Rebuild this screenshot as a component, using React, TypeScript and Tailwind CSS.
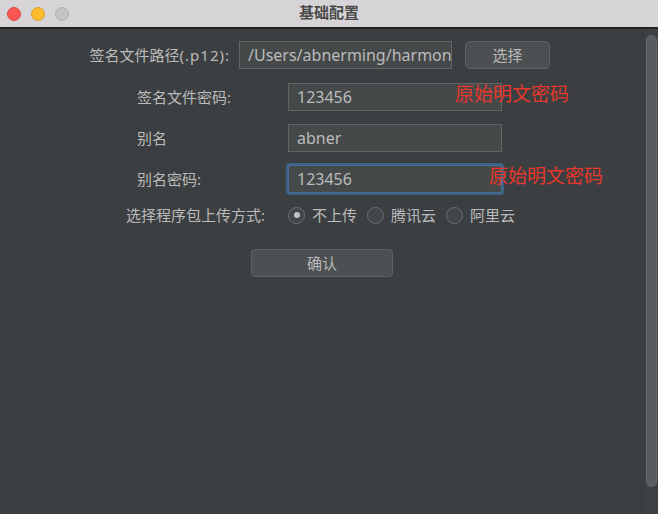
import React from 'react';

const FONT = { fontFamily: '"Noto Sans", "Noto Sans CJK SC", sans-serif' };

function Field({ value, width, focused }: { value: string; width: string; focused?: boolean }) {
  return (
    <div
      className={`${width} h-[28px] flex items-center px-2 bg-[#45494a] text-[16px] text-[#bbbbbb] overflow-hidden whitespace-nowrap ${
        focused
          ? 'border border-[#4a6f97] ring-2 ring-[#3d628a] rounded-[2px]'
          : 'border border-[#646464]'
      }`}
    >
      {value}
    </div>
  );
}

function Radio({ label, checked }: { label: string; checked?: boolean }) {
  return (
    <div className="flex items-center gap-[7px]">
      <span className="w-[17px] h-[17px] rounded-full border border-[#6b6f71] bg-[#42464a] flex items-center justify-center">
        {checked && <span className="w-[6px] h-[6px] rounded-full bg-[#c4c4c4]" />}
      </span>
      <span>{label}</span>
    </div>
  );
}

export default function App() {
  return (
    <div className="w-[658px] h-[514px] flex flex-col bg-[#3c3f41] overflow-hidden" style={FONT}>
      {/* Title bar */}
      <div className="h-[29px] shrink-0 bg-[#d6d4d6] border-b-2 border-[#232323] flex items-center">
        <div className="flex items-center gap-[10px] pl-[7px]">
          <span className="w-[14px] h-[14px] rounded-full bg-[#fc5753] border border-[#de4740]" />
          <span className="w-[14px] h-[14px] rounded-full bg-[#fdbc2e] border border-[#de9f22]" />
          <span className="w-[14px] h-[14px] rounded-full bg-[#c5c4c5] border border-[#b0afb0]" />
        </div>
        <div className="flex-1 text-center pr-[69px] pb-[2px] text-[15px] font-bold text-[#4a4a4a]">基础配置</div>
      </div>

      <div className="flex-1 flex">
        {/* Form */}
        <div className="flex-1 flex flex-col text-[15px] text-[#bbbbbb]">
          <div className="mt-[12px] h-[28px] flex items-center">
            <div className="w-[231px] text-right pr-[1px] whitespace-nowrap">
              签名文件路径<span className="tracking-[1px]">(.p12):</span>
            </div>
            <div className="ml-[8px]">
              <Field value="/Users/abnerming/harmony" width="w-[213px]" />
            </div>
            <button className="ml-[13px] w-[85px] h-[28px] rounded-[5px] bg-[#4c5052] border border-[#5e6163] text-[15px] text-[#bbbbbb]">
              选择
            </button>
          </div>

          <div className="mt-[14px] h-[28px] flex items-center relative">
            <div className="w-[288px] pl-[137px]">签名文件密码:</div>
            <Field value="123456" width="w-[214px]" />
            <span className="absolute left-[455px] top-[-3px] text-[19px] text-[#e8372c]">原始明文密码</span>
          </div>

          <div className="mt-[13px] h-[28px] flex items-center">
            <div className="w-[288px] pl-[137px]">别名</div>
            <Field value="abner" width="w-[214px]" />
          </div>

          <div className="mt-[13px] h-[28px] flex items-center relative">
            <div className="w-[288px] pl-[137px]">别名密码:</div>
            <Field value="123456" width="w-[214px]" focused />
            <span className="absolute left-[489px] top-[-3px] text-[19px] text-[#e8372c]">原始明文密码</span>
          </div>

          <div className="mt-[12px] h-[20px] flex items-center pl-[126px]">
            <span className="w-[162px]">选择程序包上传方式:</span>
            <div className="flex items-center gap-[10px]">
              <Radio label="不上传" checked />
              <Radio label="腾讯云" />
              <Radio label="阿里云" />
            </div>
          </div>

          <div className="mt-[24px] pl-[251px]">
            <button className="w-[142px] h-[28px] rounded-[4px] bg-[#4c5052] border border-[#5e6163] text-[15px] text-[#bbbbbb]">
              确认
            </button>
          </div>
        </div>

        {/* Scrollbar */}
        <div className="w-[15px] shrink-0 bg-[#3e4143] border-l border-[#393b3d] pt-[6px] pb-[27px] pl-[2px] pr-[1px]">
          <div className="h-full rounded-full bg-[#595c5e] border border-[#66696b]" />
        </div>
      </div>
    </div>
  );
}
